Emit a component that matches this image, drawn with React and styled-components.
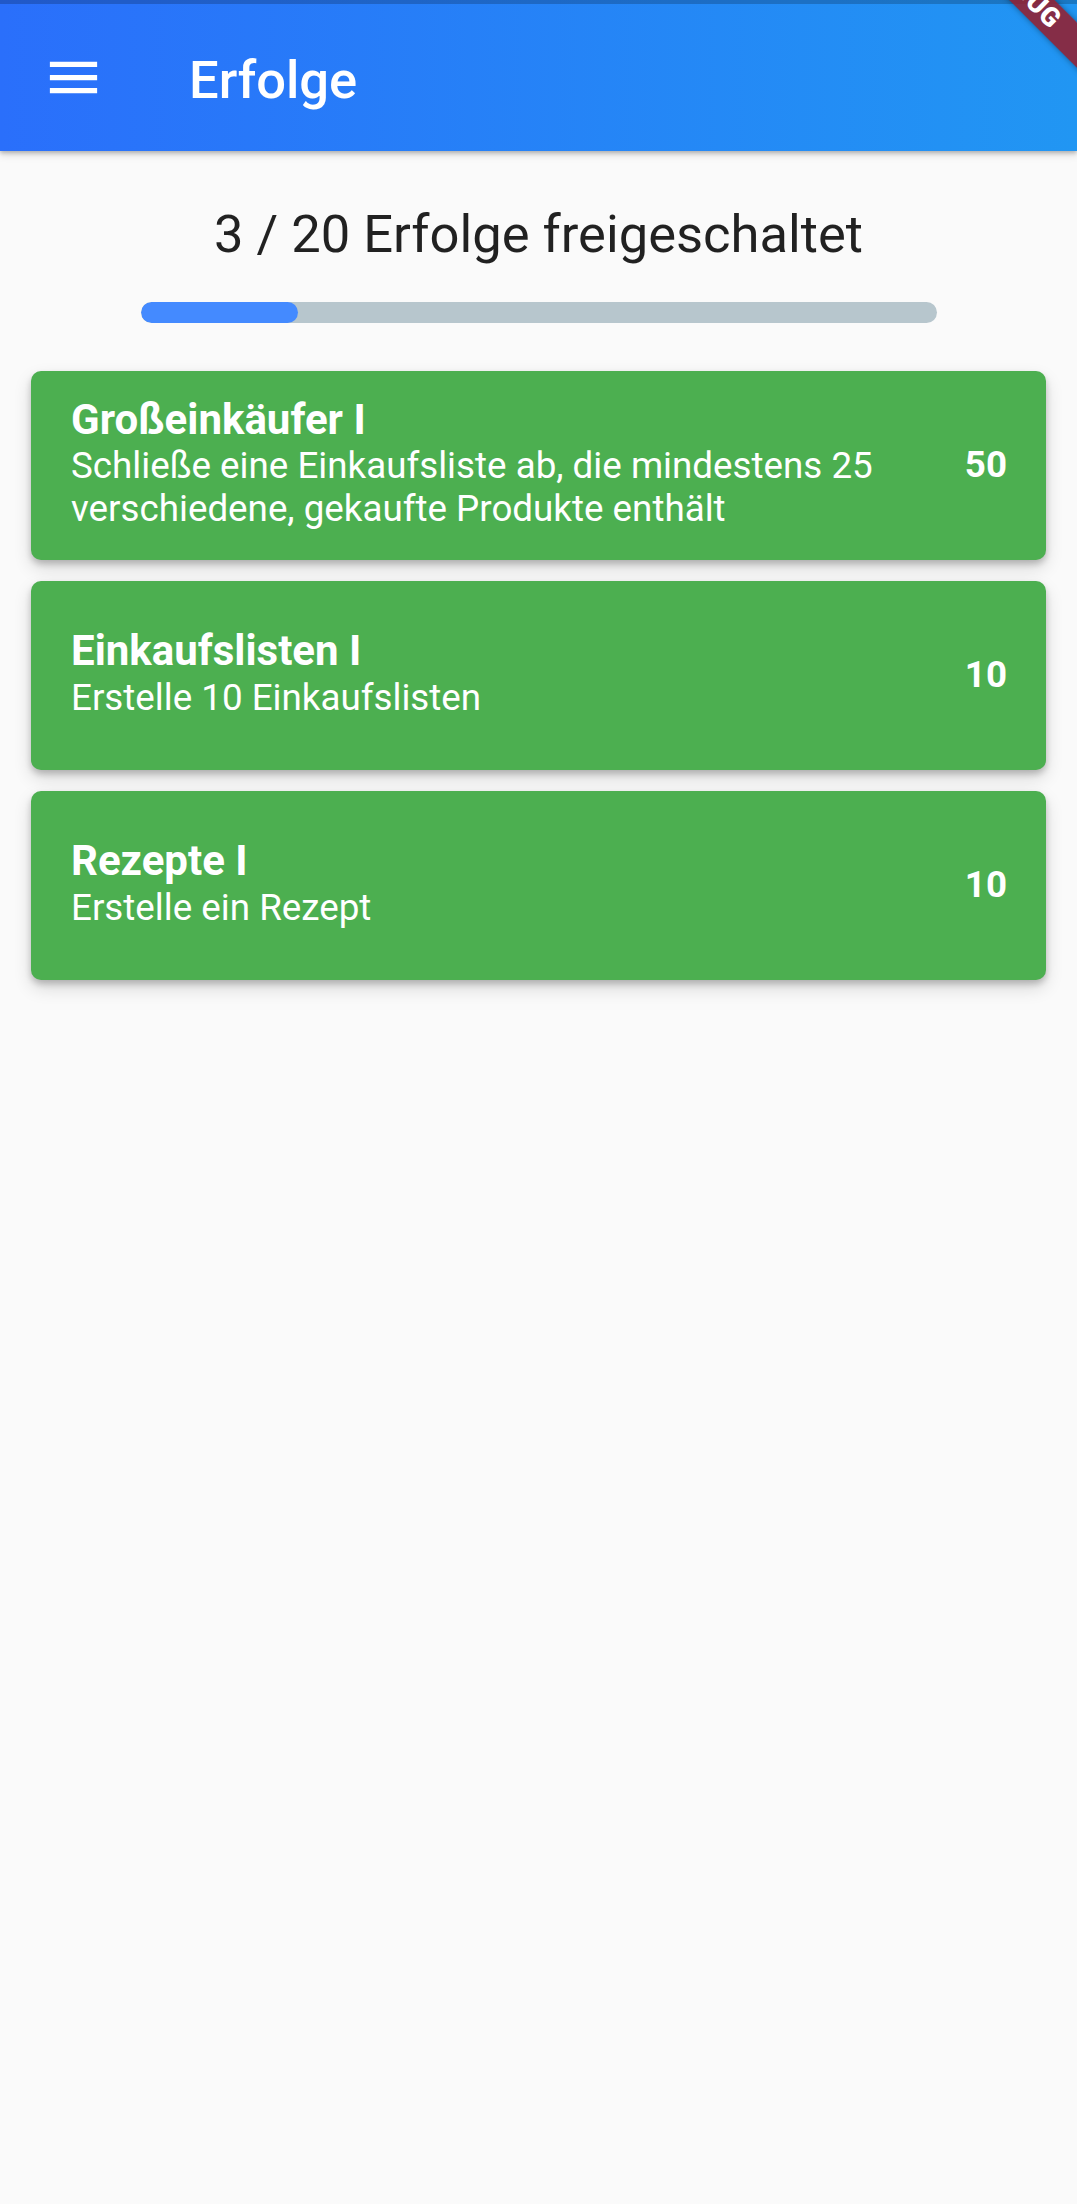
import React from "react";
import styled, { createGlobalStyle } from "styled-components";

const GlobalStyle = createGlobalStyle`
  html, body {
    margin: 0;
    padding: 0;
    background: #fafafa;
  }
  body {
    font-family: Roboto, "Noto Sans", "Liberation Sans", sans-serif;
    -webkit-font-smoothing: antialiased;
  }
  * { box-sizing: border-box; }
`;

const Page = styled.div`
  position: relative;
  min-height: 2204px;
  overflow: hidden;
  background: #fafafa;
`;

const AppBar = styled.header`
  position: relative;
  z-index: 2;
  background: linear-gradient(90deg, #2a6ffb 0%, #2196f3 100%);
  box-shadow: 0 2px 4px rgba(0, 0, 0, 0.22), 0 4px 8px rgba(0, 0, 0, 0.12);
`;

const StatusStrip = styled.div`
  height: 4px;
  background: rgba(0, 0, 0, 0.2);
`;

const Toolbar = styled.div`
  height: 147px;
  display: flex;
  align-items: center;
  padding-left: 42px;
  gap: 84px;
`;

const MenuButton = styled.button`
  width: 63px;
  height: 63px;
  padding: 0;
  border: 0;
  background: transparent;
  display: flex;
  align-items: center;
  justify-content: center;
  color: #fff;
  cursor: pointer;
`;

const Title = styled.h1`
  margin: 0;
  padding-top: 6px;
  font-size: 52.5px;
  font-weight: 500;
  line-height: 1.172;
  color: #fff;
`;

const DebugCorner = styled.div`
  position: absolute;
  top: 0;
  right: 0;
  width: 200px;
  height: 200px;
  overflow: hidden;
  pointer-events: none;
  z-index: 3;
`;

const DebugRibbon = styled.div`
  position: absolute;
  left: 43px;
  top: -23px;
  width: 210px;
  height: 31.5px;
  transform: rotate(45deg);
  background: rgba(150, 28, 42, 0.86);
  box-shadow: 0 0 6px rgba(0, 0, 0, 0.4);
  color: #fff;
  font-size: 26.8px;
  font-weight: 900;
  line-height: 31.5px;
  text-align: center;
  letter-spacing: 0.5px;
`;

const Content = styled.main`
  display: flex;
  flex-direction: column;
  align-items: center;
  padding-top: 53px;
`;

const Summary = styled.h2`
  margin: 0;
  font-size: 52.5px;
  font-weight: 400;
  line-height: 1.172;
  color: rgba(0, 0, 0, 0.87);
  text-align: center;
`;

const ProgressTrack = styled.div`
  margin-top: 36px;
  width: 796px;
  height: 21px;
  border-radius: 10.5px;
  background: #b7c6cd;
  overflow: hidden;
`;

const ProgressFill = styled.div`
  height: 100%;
  border-radius: 10.5px;
  background: #448aff;
`;

const CardList = styled.ul`
  list-style: none;
  margin: 48px 0 0;
  padding: 0 31px;
  width: 100%;
  display: flex;
  flex-direction: column;
  gap: 21px;
`;

const Card = styled.li`
  height: 189px;
  display: flex;
  align-items: center;
  gap: 42px;
  padding: 0 39px 0 40px;
  border-radius: 10px;
  background: ${(p) => (p.$unlocked ? "#4caf50" : "#9e9e9e")};
  box-shadow: 0 4px 6px rgba(0, 0, 0, 0.2), 0 8px 18px rgba(0, 0, 0, 0.14);
  color: #fff;
`;

const CardText = styled.div`
  flex: 1;
  min-width: 0;
  margin-top: -5px;
`;

const CardTitle = styled.div`
  font-size: 42px;
  font-weight: 700;
  line-height: 1.172;
`;

const CardSubtitle = styled.div`
  font-size: 36.75px;
  font-weight: 400;
  line-height: 1.172;
`;

const Points = styled.div`
  font-size: 36.75px;
  font-weight: 700;
  line-height: 1.172;
`;

const MenuIcon = () => (
  <svg width="63" height="63" viewBox="0 0 24 24" fill="currentColor">
    <path d="M3 18h18v-2H3v2zm0-5h18v-2H3v2zm0-7v2h18V6H3z" />
  </svg>
);

const achievements = [
  {
    title: "Großeinkäufer I",
    text: "Schließe eine Einkaufsliste ab, die mindestens 25 verschiedene, gekaufte Produkte enthält",
    points: 50,
  },
  { title: "Einkaufslisten I", text: "Erstelle 10 Einkaufslisten", points: 10 },
  { title: "Rezepte I", text: "Erstelle ein Rezept", points: 10 },
];

export default function App() {
  const progress = 157 / 796;
  return (
    <Page>
      <GlobalStyle />
      <AppBar>
        <StatusStrip />
        <Toolbar>
          <MenuButton aria-label="Menü">
            <MenuIcon />
          </MenuButton>
          <Title>Erfolge</Title>
        </Toolbar>
      </AppBar>
      <DebugCorner>
        <DebugRibbon>DEBUG</DebugRibbon>
      </DebugCorner>
      <Content>
        <Summary>3 / 20 Erfolge freigeschaltet</Summary>
        <ProgressTrack>
          <ProgressFill style={{ width: `${progress * 100}%` }} />
        </ProgressTrack>
        <CardList>
          {achievements.map((a) => (
            <Card key={a.title} $unlocked>
              <CardText>
                <CardTitle>{a.title}</CardTitle>
                <CardSubtitle>{a.text}</CardSubtitle>
              </CardText>
              <Points>{a.points}</Points>
            </Card>
          ))}
        </CardList>
      </Content>
    </Page>
  );
}
